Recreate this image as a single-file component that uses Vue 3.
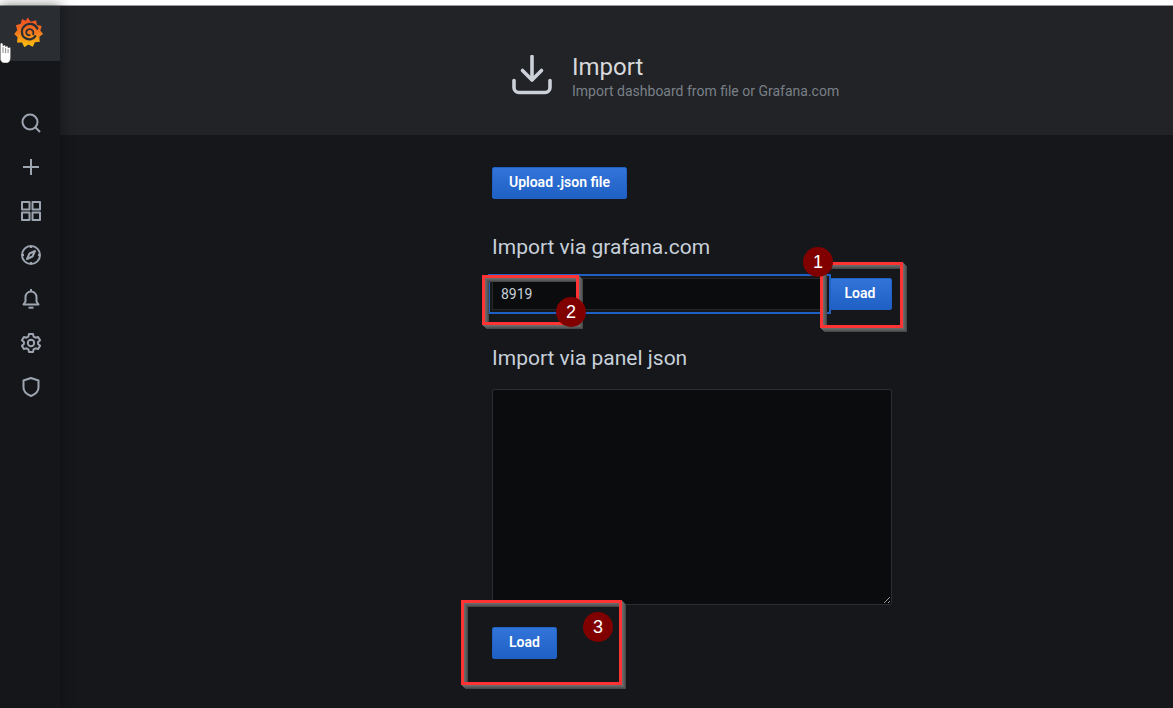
<script setup>
const navIcons = [
  { id: 'search', paths: ['M11 3.500a7.500 7.500 0 1 0 0 15a7.500 7.500 0 0 0 0-15z', 'M16.500 16.500L21 21'] },
  { id: 'plus', paths: ['M12 4v16', 'M4 12h16'] },
  { id: 'dashboards', paths: ['M3 3h7.500v7.500H3z', 'M13.500 3H21v7.500h-7.500z', 'M3 13.500h7.500V21H3z', 'M13.500 13.500H21V21h-7.500z'] },
  { id: 'explore', paths: ['M12 3a9 9 0 1 0 0 18a9 9 0 0 0 0-18z', 'M16 8l-2.500 5.500L8 16l2.500-5.500z', 'M12 3v2', 'M12 19v2', 'M3 12h2', 'M19 12h2'] },
  { id: 'alerting', paths: ['M12 4.500a5.500 5.500 0 0 0-5.500 5.500v4.500L4.500 17.500h15l-2-3V10A5.500 5.500 0 0 0 12 4.500z', 'M12 2v2.500', 'M9.500 20.700h5'] },
  { id: 'config', paths: ['M12 8.800a3.200 3.200 0 1 0 0 6.400a3.200 3.200 0 0 0 0-6.400z', 'M10 3h4l.6 2.600l1.900 1.100l2.600-.8l2 3.400l-2 1.800v1.800l2 1.800l-2 3.400l-2.600-.8l-1.900 1.100L14 21h-4l-.6-2.600l-1.900-1.100l-2.600.8l-2-3.400l2-1.800v-1.800l-2-1.800l2-3.400l2.600.8l1.900-1.100z'] },
  { id: 'shield', paths: ['M12 3l7.500 2.500v7c0 4-3.200 6.800-7.500 8.500c-4.300-1.700-7.500-4.500-7.500-8.500v-7z'] },
]

const marks = [
  { n: 1, cls: 'dot-1' },
  { n: 2, cls: 'dot-2' },
  { n: 3, cls: 'dot-3' },
]
</script>

<template>
  <div class="page">
    <div class="top-strip" />
    <div class="shell">
      <aside class="sidebar">
        <div class="logo-cell">
          <svg class="logo" viewBox="0 0 32 32">
            <defs>
              <linearGradient id="gf" x1="0" y1="0" x2="0" y2="1">
                <stop offset="0" stop-color="#ee4b26" />
                <stop offset=".5" stop-color="#f3781f" />
                <stop offset="1" stop-color="#fcc60c" />
              </linearGradient>
            </defs>
            <path fill="url(#gf)" d="M14.500 .5l3.500 4.500l5.500-1.500l1 5l5 1l-1.500 5l3 3.500l-4 3l.5 5.500l-5.200.3l-2.300 5l-4.600-2.500l-4.400 2.800l-2.400-4.800l-5.400-.2l.6-5.400L.3 18l3.200-4.200L2 8.800l5.200-1.500l1.300-5.300l4 2z" />
            <path fill="none" stroke="#2a2e33" stroke-width="2.300" stroke-linecap="round" d="M25 12.500c-2.200-5-8.500-6.800-13-3.600c-4.500 3.200-4.700 9.800-.7 13.200c3.800 3 9.300 2.200 11.500-1.700" />
            <path fill="none" stroke="#2a2e33" stroke-width="2" stroke-linecap="round" d="M20.500 18.500c1-2.800-1-5.600-3.800-5.600c-2.500 0-4.200 2.300-3.500 4.500c.5 1.500 2 2.300 3.500 2" />
          </svg>
        </div>
        <nav class="nav">
          <div v-for="icon in navIcons" :key="icon.id" class="nav-item">
            <svg viewBox="0 0 24 24" width="24" height="24" fill="none" stroke="#9da5b1" stroke-width="2" stroke-linejoin="round">
              <path v-for="d in icon.paths" :key="d" :d="d" />
            </svg>
          </div>
        </nav>
      </aside>

      <div class="main">
        <header class="page-header">
          <svg class="header-icon" viewBox="0 0 40 40" width="40" height="40" fill="none" stroke="#ccd0d8" stroke-width="3.600" stroke-linecap="round" stroke-linejoin="round">
            <path d="M20 1.500v23" />
            <path d="M10.500 15.500l9.500 9.500l9.500-9.500" />
            <path d="M2 25.500v7a5 5 0 0 0 5 5h26a5 5 0 0 0 5-5v-7" />
          </svg>
          <div>
            <h1 class="title">Import</h1>
            <div class="subtitle">Import dashboard from file or Grafana.com</div>
          </div>
        </header>

        <section class="content">
          <button class="btn upload">Upload .json file</button>

          <h2 class="heading first">Import via grafana.com</h2>
          <div class="id-row">
            <div class="input-wrap">
              <input class="id-input" value="8919" />
            </div>
            <button class="btn load-inline">Load</button>
          </div>

          <h2 class="heading second">Import via panel json</h2>
          <textarea class="json-area" />
          <button class="btn load-bottom">Load</button>
        </section>
      </div>
    </div>

    <!-- screenshot annotations drawn on top of the page -->
    <div class="mark-box box-1" />
    <div class="mark-box box-2" />
    <div class="mark-box box-3" />
    <div v-for="m in marks" :key="m.n" :class="['dot', m.cls]">{{ m.n }}</div>

    <svg class="cursor" viewBox="0 0 12 22" width="12" height="22">
      <path fill="#fff" stroke="#222" stroke-width=".5" d="M.2 2c0-1.500 2.800-1.500 2.800 0V4c.1-1.200 2.500-1.200 2.600 0v.8c.1-1.200 2.400-1.200 2.500 0V6c.1-1 2.500-1 2.600.3V15c0 3.500-1.500 6-4 6H4c-2 0-3-1.500-3.800-3.500z" />
      <path fill="none" stroke="#555" stroke-width=".7" d="M3 5v6M5.600 6v5M8.100 7v4" />
    </svg>
  </div>
</template>

<style>
html, body { margin: 0; background: #16171b; }
</style>

<style scoped>
.page { position: relative; width: 1173px; height: 708px; overflow: hidden; font-family: Roboto, "Liberation Sans", sans-serif; display: flex; flex-direction: column; background: #16171b; }
.top-strip { height: 6px; background: #fff; border-bottom: 1px solid #9a9a9a; box-sizing: border-box; flex-shrink: 0; }
.shell { flex: 1; display: flex; min-height: 0; }

.sidebar { position: relative; z-index: 1; width: 60px; flex-shrink: 0; background: #141619; box-shadow: 0 0 12px rgba(10, 10, 12, .55); display: flex; flex-direction: column; }
.logo-cell { height: 55px; background: #2a2e33; display: flex; align-items: flex-start; padding: 11px 0 0 14px; box-sizing: border-box; }
.logo { width: 30px; height: 30px; }
.nav { padding-top: 40px; display: flex; flex-direction: column; }
.nav-item { height: 44px; display: flex; align-items: center; justify-content: center; margin-left: 2px; }

.main { flex: 1; display: flex; flex-direction: column; min-width: 0; }
.page-header { height: 129px; flex-shrink: 0; background: #212327; display: flex; align-items: flex-start; padding: 48px 0 0 452px; box-sizing: border-box; }
.header-icon { margin: 1px 20px 0 0; flex-shrink: 0; }
.title { margin: 0; font-size: 24px; font-weight: 400; line-height: 26px; color: #d8d9da; }
.subtitle { font-size: 14px; line-height: 20px; color: #7b8087; margin-top: 1px; }

.content { padding: 32px 0 0 432px; width: 400px; }
.btn { display: block; height: 32px; border: 1px solid #1f62c4; border-radius: 2px; background: linear-gradient(#3274d9, #1f60c4); color: #fff; font-family: inherit; font-size: 14px; font-weight: 600; padding: 0 0 2px; box-sizing: border-box; }
.upload { width: 135px; }

.heading { margin: 0; font-size: 21px; font-weight: 400; line-height: 24px; color: #c7d0d9; }
.heading.first { margin-top: 36px; }
.heading.second { margin-top: 36px; }

.id-row { display: flex; margin-top: 19px; }
.input-wrap { width: 335px; height: 32px; }
.id-input { width: 100%; height: 100%; box-sizing: border-box; background: #0b0c0e; border: 1px solid #262628; border-radius: 0; color: #c7d0d9; font-family: inherit; font-size: 14px; padding: 0 8px; outline: 2px solid #1f60c4; outline-offset: 2px; }
.load-inline { width: 62px; margin-left: 3px; padding-right: 2px; }

.json-area { display: block; margin-top: 19px; width: 400px; height: 216px; box-sizing: border-box; background: #0b0c0e; border: 1px solid #2c2d30; border-radius: 2px; color: #c7d0d9; outline: none; }
.load-bottom { width: 65px; margin-top: 22px; }

.mark-box { position: absolute; box-sizing: border-box; border: 3px solid #ff3333; box-shadow: 1px 1px 0 #6a6a6a, 2px 2px 0 #606060, 3px 3px 0 #565656, 4px 4px 0 #484848, inset 1px 1px 0 #6a6a6a, inset 2px 2px 0 #606060, inset 3px 3px 0 #565656, inset 4px 4px 0 #484848; }
.box-1 { left: 820px; top: 262px; width: 83px; height: 66px; }
.box-2 { left: 482px; top: 275px; width: 97px; height: 50px; }
.box-3 { left: 461px; top: 600px; width: 161px; height: 85px; }

.dot { position: absolute; width: 30px; height: 30px; border-radius: 50%; background: #800000; color: #fff; font-family: "Liberation Sans", sans-serif; font-size: 18px; line-height: 30px; text-align: center; }
.dot-1 { left: 803px; top: 247px; }
.dot-2 { left: 556px; top: 297px; }
.dot-3 { left: 583px; top: 612px; }

.cursor { position: absolute; z-index: 2; left: 0; top: 42px; }
</style>
